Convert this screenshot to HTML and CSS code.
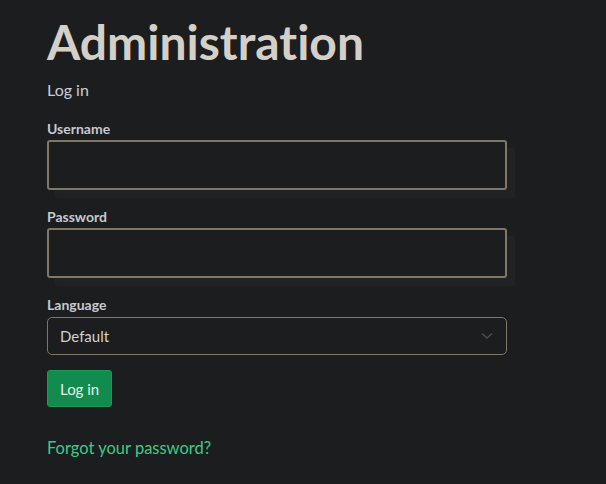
FILE: index.html
```html
<!DOCTYPE html>
<html>
<head>
<meta charset="utf-8">
<link rel="stylesheet" href="styles.css">
</head>
<body>
<main class="page">
  <h1 class="title">Administration</h1>
  <p class="subtitle">Log in</p>
  <form class="form">
    <div class="field">
      <label class="label">Username</label>
      <div class="input-wrap"><input class="input" type="text"></div>
    </div>
    <div class="field">
      <label class="label">Password</label>
      <div class="input-wrap"><input class="input" type="password"></div>
    </div>
    <div class="field field-last">
      <label class="label">Language</label>
      <div class="select">
        <span class="select-value">Default</span>
        <svg class="chevron" width="12" height="8" viewBox="0 0 12 8"><path d="M1 1.5 L6 6 L11 1.5" fill="none" stroke="#4a4d52" stroke-width="1.5"/></svg>
      </div>
    </div>
    <button class="btn" type="button">Log in</button>
  </form>
  <a class="forgot" href="#">Forgot your password?</a>
</main>
</body>
</html>
```
FILE: styles.css
```css
html, body {
  margin: 0;
  padding: 0;
  background: #1c1d1f;
}
body {
  font-family: Lato, "Noto Sans", sans-serif;
  font-variant-ligatures: none;
  color: #d0ccc4;
}
.page {
  padding: 10px 0 0 47px;
  width: 460px;
}
.title {
  margin: 0;
  font-size: 48px;
  font-weight: 700;
  line-height: 64px;
  color: #d4d0c8;
}
.subtitle {
  margin: 6px 0 0;
  font-size: 16px;
  line-height: 20px;
  color: #c9ccd6;
}
.form {
  margin-top: 20px;
}
.field {
  margin-bottom: 18px;
}
.field-last {
  margin-bottom: 15px;
}
.label {
  display: block;
  font-size: 14px;
  font-weight: 700;
  line-height: 18px;
  color: #c6c9d0;
  margin-bottom: 2px;
}
.input-wrap {
  box-shadow: 8px 8px 0 #202224;
  border-radius: 3px;
}
.input {
  display: block;
  box-sizing: border-box;
  width: 460px;
  height: 50px;
  background: #1c1d1f;
  border: 2px solid #817766;
  border-radius: 3px;
  outline: none;
}
.select {
  box-sizing: border-box;
  width: 460px;
  height: 38px;
  margin-top: 3px;
  border: 1px solid #7e7666;
  border-radius: 5px;
  display: flex;
  align-items: center;
  justify-content: space-between;
  padding: 0 13px 0 12px;
}
.select-value {
  font-size: 15px;
  color: #d2d0cc;
}
.btn {
  display: block;
  margin-top: 0;
  height: 37px;
  padding: 0 12px;
  background: #118b4e;
  border: 1px solid #1a9a58;
  border-radius: 3px;
  color: #e8efe9;
  font-family: Lato, "Noto Sans", sans-serif;
  font-size: 15px;
}
.forgot {
  display: inline-block;
  margin-top: 31px;
  font-size: 16.5px;
  color: #3ccb86;
  text-decoration: none;
}
```
